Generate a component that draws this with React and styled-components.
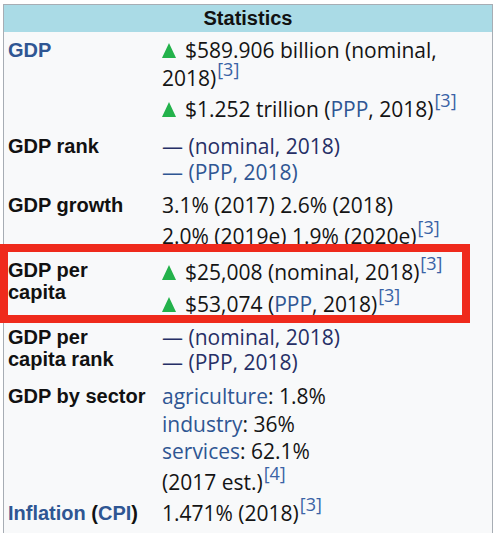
import React from 'react';
import styled, { createGlobalStyle, css } from 'styled-components';

const Global = createGlobalStyle`
  html, body { margin: 0; padding: 0; background: #ffffff; }
  body { font-family: "Open Sans", "Liberation Sans", Arial, sans-serif; color: #141414; }
`;

const Page = styled.div`
  width: 499px;
  height: 533px;
  overflow: hidden;
  box-sizing: border-box;
  padding: 4px 0 0 3px;
`;

const Infobox = styled.div`
  width: 490px;
  min-height: 540px;
  box-sizing: border-box;
  border: 1px solid #a7adb4;
  background: #f8f9fa;
`;

const Header = styled.div`
  height: 27px;
  display: flex;
  align-items: center;
  justify-content: center;
  background: #aadbe6;
  font-family: "Liberation Sans", Arial, sans-serif;
  font-weight: 700;
  font-size: 20px;
  color: #111;
`;

const Row = styled.div`
  position: relative;
  display: grid;
  grid-template-columns: 158px 1fr;
  padding: ${p => p.$pt ?? 4}px 0 4px;
  ${p => p.$highlight && css`
    &::after {
      content: '';
      position: absolute;
      left: -4px;
      top: ${p.$hlTop}px;
      width: 470px;
      height: 79px;
      box-sizing: border-box;
      border: 8px solid #ef2a1c;
      pointer-events: none;
    }
  `}
`;

const Label = styled.div`
  padding: ${p => p.$lt ?? 2}px 0 0 4px;
  font-family: "Liberation Sans", Arial, sans-serif;
  font-weight: 700;
  font-size: 20px;
  line-height: 22px;
  color: #111;
`;

const Value = styled.div`
  font-size: 21px;
  line-height: 26px;
  padding-right: 20px;
  white-space: nowrap;
`;

const Line = styled.div`
  height: 26px;
  margin-top: ${p => p.$mt || 0}px;
  display: flex;
  align-items: center;
`;

const Link = styled.span`
  color: ${p => (p.$dark ? '#262f66' : '#2f5693')};
`;

const Sup = styled.span`
  font-size: 18px;
  line-height: 0;
  position: relative;
  top: -10px;
  margin-left: 1px;
  color: #3a63a6;
`;

const Tri = styled.svg`
  width: 14px;
  height: 15px;
  margin-right: 9px;
  flex: none;
`;

const Up = () => (
  <Tri viewBox="0 0 14 15">
    <polygon points="7,0 14,15 0,15" fill="#23b24b" />
  </Tri>
);

const Text = styled.span``;

export default function App() {
  return (
    <Page>
      <Global />
      <Infobox>
        <Header>Statistics</Header>

        <Row $pt={5}>
          <Label><Link>GDP</Link></Label>
          <Value>
            <Line><Up /><Text>$589.906 billion (nominal,</Text></Line>
            <Line $mt={2}><Text>2018)<Sup>[3]</Sup></Text></Line>
            <Line $mt={5}><Up /><Text>$1.252 trillion (<Link>PPP</Link>, 2018)<Sup>[3]</Sup></Text></Line>
          </Value>
        </Row>

        <Row $pt={7}>
          <Label>GDP rank</Label>
          <Value>
            <Line><Link $dark>— (nominal, 2018)</Link></Line>
            <Line><Link>— (PPP, 2018)</Link></Line>
          </Value>
        </Row>

        <Row $pt={3}>
          <Label>GDP growth</Label>
          <Value>
            <Line>3.1% (2017) 2.6% (2018)</Line>
            <Line $mt={5}><Text>2.0% (2019e) 1.9% (2020e)<Sup>[3]</Sup></Text></Line>
          </Value>
        </Row>

        <Row $pt={6} $highlight $hlTop={-9}>
          <Label $lt={0}>GDP per<br />capita</Label>
          <Value>
            <Line><Up /><Text>$25,008 (nominal, 2018)<Sup>[3]</Sup></Text></Line>
            <Line $mt={6}><Up /><Text>$53,074 (<Link>PPP</Link>, 2018)<Sup>[3]</Sup></Text></Line>
          </Value>
        </Row>

        <Row $pt={3}>
          <Label>GDP per<br />capita rank</Label>
          <Value>
            <Line><Link $dark>— (nominal, 2018)</Link></Line>
            <Line $mt={-1}><Link $dark>— (PPP, 2018)</Link></Line>
          </Value>
        </Row>

        <Row $pt={4}>
          <Label>GDP by sector</Label>
          <Value>
            <Line><Text><Link>agriculture</Link>: 1.8%</Text></Line>
            <Line $mt={2}><Text><Link>industry</Link>: 36%</Text></Line>
            <Line $mt={1}><Text><Link>services</Link>: 62.1%</Text></Line>
            <Line $mt={5}><Text>(2017 est.)<Sup>[4]</Sup></Text></Line>
          </Value>
        </Row>

        <Row $pt={1}>
          <Label><Link>Inflation</Link> (<Link>CPI</Link>)</Label>
          <Value>
            <Line><Text>1.471% (2018)<Sup>[3]</Sup></Text></Line>
          </Value>
        </Row>
      </Infobox>
    </Page>
  );
}
